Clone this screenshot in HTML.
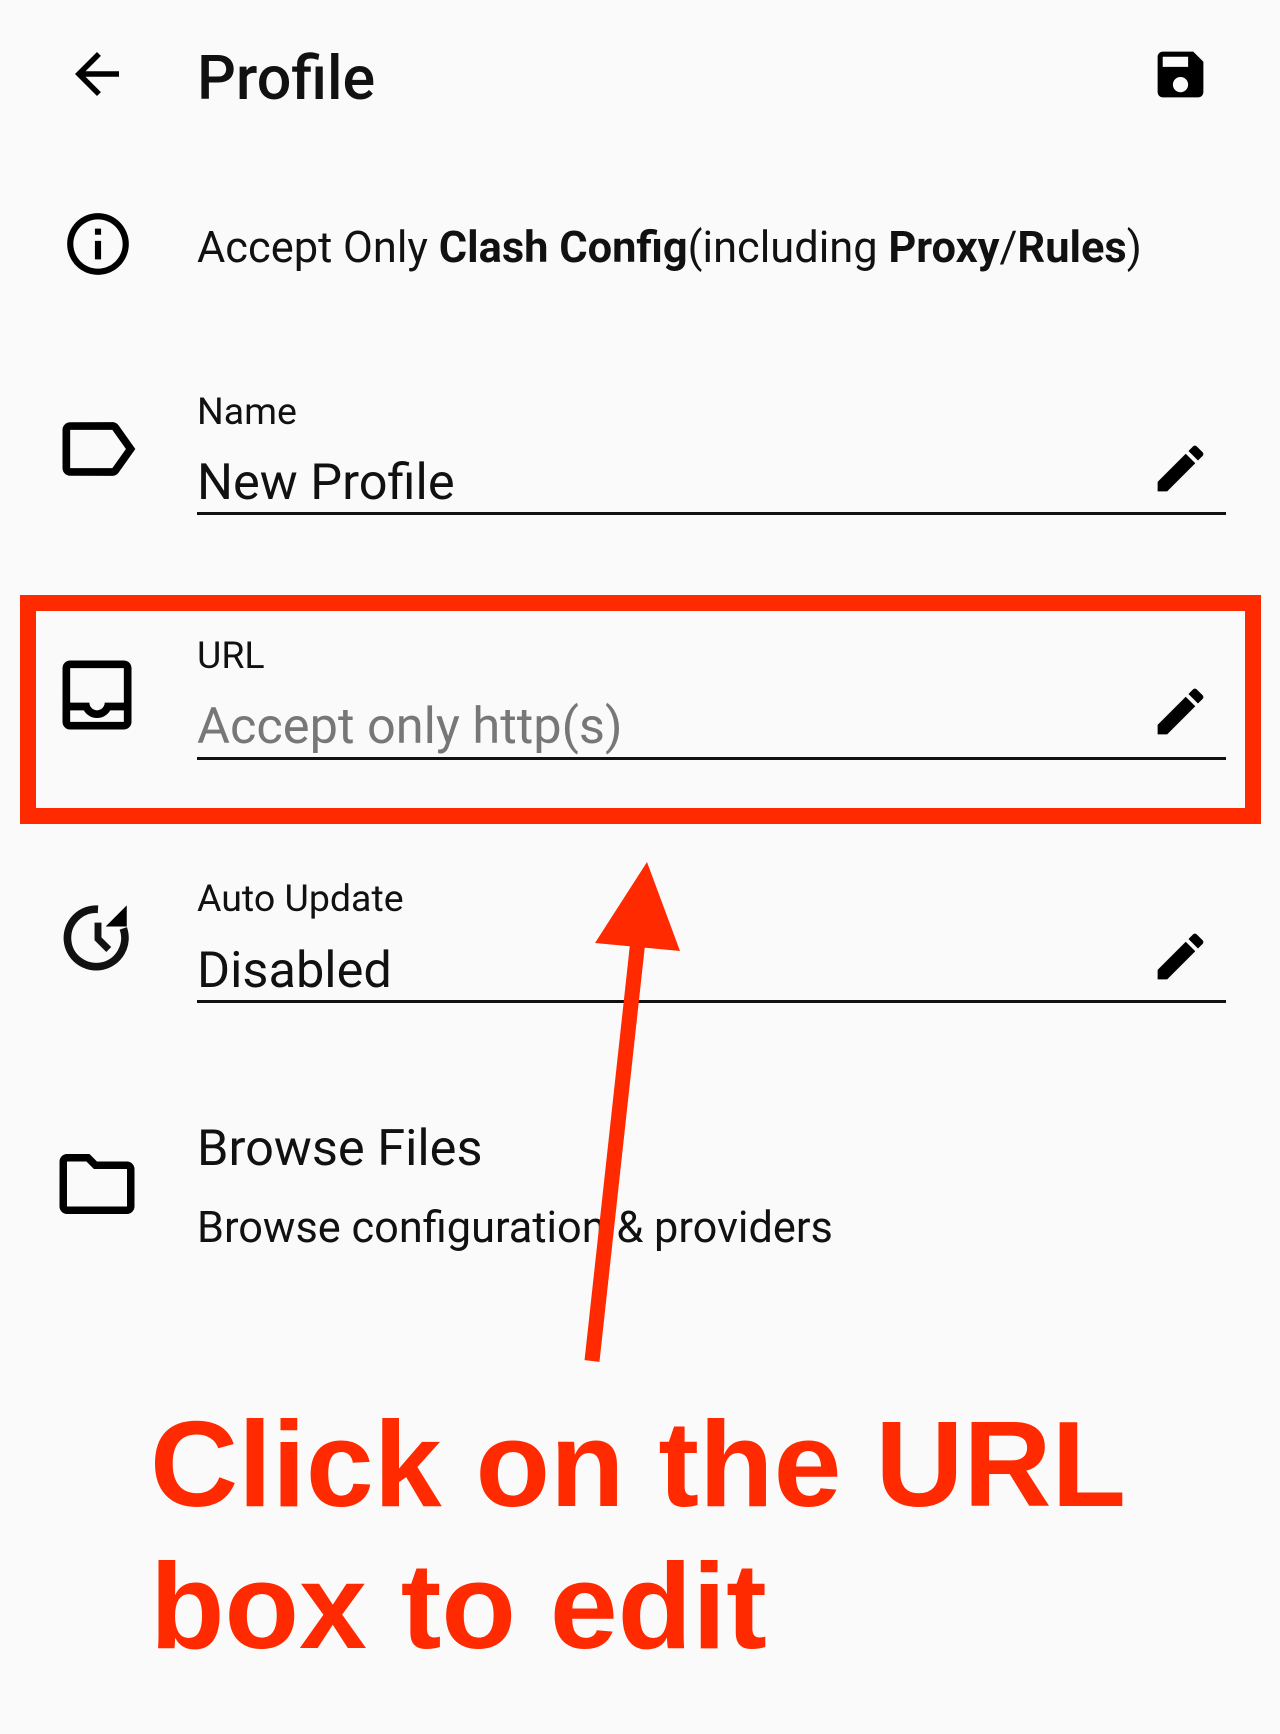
<!DOCTYPE html>
<html><head><meta charset="utf-8"><style>
body{margin:0;width:1280px;height:1734px;background:#fafafa;position:relative;overflow:hidden;font-family:"Roboto","Liberation Sans",sans-serif;color:#111}
.a{position:absolute;white-space:nowrap;line-height:1}
svg.i{position:absolute;width:92px;height:92px}
svg.p{position:absolute;width:61px;height:61px}
.ul{position:absolute;left:197px;width:1029px;height:3px;background:#111}
.lab{font-size:37.5px}
.val{font-size:50.5px}
.big{font-family:"Liberation Sans",sans-serif;font-weight:bold;color:#ff2a00;font-size:122px}
</style></head><body>
<svg class="p" style="left:64px;top:41px;width:66px;height:66px" viewBox="0 0 24 24"><path d="M20 11H7.83l5.59-5.59L12 4l-8 8 8 8 1.41-1.41L7.83 13H20v-2z"/></svg>
<div class="a" style="left:197px;top:48px;font-size:61px;font-weight:500">Profile</div>
<svg class="p" style="left:1150px;top:44px" viewBox="0 0 24 24"><path d="M17 3H5a2 2 0 0 0-2 2v14a2 2 0 0 0 2 2h14a2 2 0 0 0 2-2V7l-4-4zm-5 16a3 3 0 1 1 0-6 3 3 0 0 1 0 6zm3-10H5V5h10v4z"/></svg>

<svg class="i" style="left:61px;top:207px;width:74px;height:74px" viewBox="0 0 24 24"><path d="M11 7h2v2h-2zm0 4h2v6h-2zm1-9C6.48 2 2 6.480 2 12s4.48 10 10 10 10-4.48 10-10S17.52 2 12 2zm0 18c-4.41 0-8-3.59-8-8s3.59-8 8-8 8 3.59 8 8-3.59 8-8 8z"/></svg>
<div class="a" style="left:197px;top:226px;font-size:43.4px">Accept Only <b>Clash Config</b>(including <b>Proxy</b>/<b>Rules</b>)</div>

<svg class="i" style="left:51px;top:403px" viewBox="0 0 24 24"><path d="M17.63 5.84C17.27 5.33 16.67 5 16 5L5 5.01C3.9 5.01 3 5.9 3 7v10c0 1.1.9 1.99 2 1.99L16 19c.67 0 1.27-.33 1.63-.84L22 12l-4.37-6.16zM16 17H5V7h11l3.55 5L16 17z"/></svg>
<div class="a lab" style="left:197px;top:394px">Name</div>
<div class="a val" style="left:197px;top:458px">New Profile</div>
<div class="ul" style="top:512px"></div>
<svg class="p" style="left:1150px;top:438px" viewBox="0 0 24 24"><path d="M3 17.25V21h3.75L17.81 9.94l-3.75-3.75L3 17.25zM20.71 7.04a1 1 0 0 0 0-1.41l-2.34-2.34a1 1 0 0 0-1.41 0l-1.83 1.83 3.75 3.75 1.83-1.83z"/></svg>

<div style="position:absolute;left:20px;top:595px;width:1209px;height:197px;border:16px solid #ff2a00"></div>
<svg class="i" style="left:51px;top:649px" viewBox="0 0 24 24"><path d="M19 3H4.99C3.88 3 3.01 3.89 3.01 5L3 19c0 1.1.88 2 1.99 2H19c1.1 0 2-.9 2-2V5c0-1.11-.9-2-2-2zm0 16H5v-3h3.56c.69 1.19 1.97 2 3.45 2s2.75-.81 3.45-2H19v3zm0-5h-4.99c0 1.1-.9 2-2 2s-2-.9-2-2H5V5h14v9z"/></svg>
<div class="a lab" style="left:197px;top:638px">URL</div>
<div class="a val" style="left:197px;top:702px;color:#777">Accept only http(s)</div>
<div class="ul" style="top:757px"></div>
<svg class="p" style="left:1150px;top:681px" viewBox="0 0 24 24"><path d="M3 17.25V21h3.75L17.81 9.94l-3.75-3.75L3 17.25zM20.71 7.04a1 1 0 0 0 0-1.41l-2.34-2.34a1 1 0 0 0-1.41 0l-1.83 1.83 3.75 3.75 1.83-1.83z"/></svg>

<svg class="i" style="left:52px;top:892px" viewBox="0 0 24 24"><path d="M18.6 9.5A7.5 7.5 0 1 1 12 4.5" fill="none" stroke="#111" stroke-width="2"/><path d="M12 8v4.2l2.8 2.8" fill="none" stroke="#111" stroke-width="1.8"/><path d="M19.5 3.5v5.5h-5.5z"/></svg>
<div class="a lab" style="left:197px;top:881px">Auto Update</div>
<div class="a val" style="left:197px;top:946px">Disabled</div>
<div class="ul" style="top:1000px"></div>
<svg class="p" style="left:1150px;top:926px" viewBox="0 0 24 24"><path d="M3 17.25V21h3.75L17.81 9.94l-3.75-3.75L3 17.25zM20.71 7.04a1 1 0 0 0 0-1.41l-2.34-2.34a1 1 0 0 0-1.41 0l-1.83 1.83 3.75 3.75 1.83-1.83z"/></svg>

<svg class="i" style="left:52px;top:1139px;width:90px;height:90px" viewBox="0 0 24 24"><path d="M9.17 6l2 2H20v10H4V6h5.17M10 4H4c-1.1 0-1.99.9-1.99 2L2 18c0 1.1.9 2 2 2h16c1.1 0 2-.9 2-2V8c0-1.1-.9-2-2-2h-8l-2-2z"/></svg>
<div class="a" style="left:197px;top:1124px;font-size:50.5px">Browse Files</div>
<div class="a" style="left:197px;top:1206px;font-size:43.3px">Browse configuration &amp; providers</div>

<svg style="position:absolute;left:0;top:0" width="1280" height="1734"><line x1="592" y1="1361" x2="638" y2="940" stroke="#ff2a00" stroke-width="15"/><polygon points="647,862 595,943 680,951" fill="#ff2a00"/></svg>

<div class="a big" style="left:150px;top:1403px">Click on the URL</div>
<div class="a big" style="left:150px;top:1545px">box to edit</div>
</body></html>
